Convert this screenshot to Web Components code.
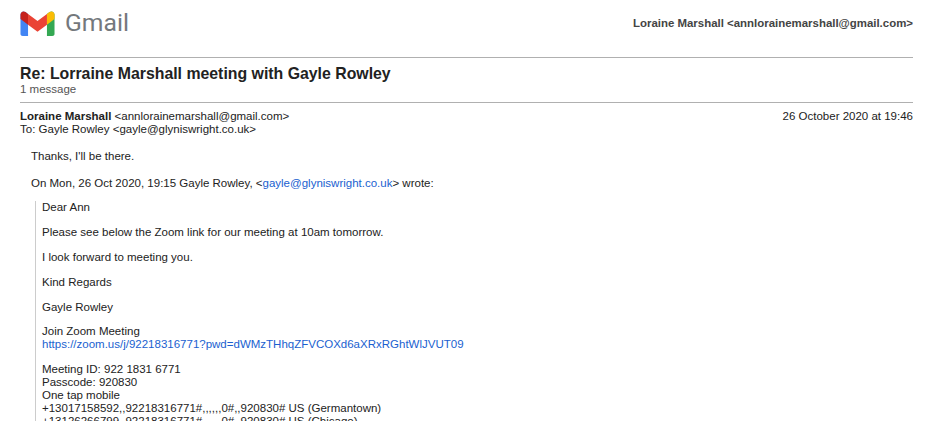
<!DOCTYPE html>
<html lang="en"><head><meta charset="utf-8"><title>Gmail - Re: Lorraine Marshall meeting with Gayle Rowley</title>
<style>
html,body{margin:0;height:421px;overflow:hidden;background:#fff}
body{font:11.5px/13px "Liberation Sans",Arial,sans-serif;color:#222}
gm-message a{color:#1a5fd0}
</style></head><body>
<gm-print>
  <gm-top slot="top" account="Loraine Marshall &lt;annlorainemarshall@gmail.com&gt;"></gm-top>
  <gm-subject slot="subject" count="1 message">Re: Lorraine Marshall meeting with Gayle Rowley</gm-subject>
  <gm-meta slot="meta" name="Loraine Marshall" addr="&lt;annlorainemarshall@gmail.com&gt;" date="26 October 2020 at 19:46" to="To: Gayle Rowley &lt;gayle@glyniswright.co.uk&gt;"></gm-meta>
  <gm-message slot="body">
    <p>Thanks, I'll be there.</p>
    <p>On Mon, 26 Oct 2020, 19:15 Gayle Rowley, &lt;<a>gayle@glyniswright.co.uk</a>&gt; wrote:</p>
    <gm-quote>
      <p>Dear Ann</p>
      <p>Please see below the Zoom link for our meeting at 10am tomorrow.</p>
      <p>I look forward to meeting you.</p>
      <p>Kind Regards</p>
      <p>Gayle Rowley</p>
      <p>Join Zoom Meeting<br><a>https://zoom.us/j/92218316771?pwd=dWMzTHhqZFVCOXd6aXRxRGhtWlJVUT09</a></p>
      <p>Meeting ID: 922 1831 6771<br>Passcode: 920830<br>One tap mobile<br>+13017158592,,92218316771#,,,,,,0#,,920830# US (Germantown)<br>+13126266799,,92218316771#,,,,,,0#,,920830# US (Chicago)</p>
    </gm-quote>
  </gm-message>
</gm-print>
<script>
function def(name, html){
  customElements.define(name, class extends HTMLElement{
    connectedCallback(){
      if(this.shadowRoot) return;
      this.attachShadow({mode:'open'}).innerHTML=html(this);
    }
  });
}
const esc=s=>(s||'').replace(/&/g,'&amp;').replace(/</g,'&lt;');
def('gm-print',()=>`<style>
:host{display:block;padding:0 16px 0 20px;height:421px;overflow:hidden}
</style><slot name="top"></slot><slot name="subject"></slot><slot name="meta"></slot><slot name="body"></slot>`);
def('gm-top',h=>`<style>
:host{display:flex;justify-content:space-between;align-items:flex-start;height:57px;border-bottom:1px solid #b0b0b0}
.logo{display:flex;align-items:center;gap:10px;margin-top:9px}
svg{display:block}
.word{font:24.7px/26px Roboto,sans-serif;color:#74787c;padding-top:1px}
.acct{font-weight:700;color:#444;margin-top:17px;font-size:11.45px;white-space:nowrap}
</style>
<div class="logo"><svg width="35" height="26" viewBox="0 0 36 27.5">
<path d="M0 5C0 2 3 .5 5.300 2.200L8 4.200V27.500H2.400C1 27.500 0 26.500 0 25.100Z" fill="#4285f4"/>
<path d="M36 5c0-3-3-4.500-5.300-2.800L28 4.200V27.500h5.600c1.400 0 2.400-1 2.400-2.400Z" fill="#34a853"/>
<path d="M28 4.200 30.700 2.200C33 .5 36 2 36 5V9.500L28 15.500Z" fill="#fbbc04"/>
<path d="M8 4.200 18 11.700 28 4.200V15.500L18 23 8 15.500Z" fill="#ea4335"/>
<path d="M0 5C0 2 3 .5 5.300 2.200L8 4.200V15.500L0 9.500Z" fill="#c5221f"/>
</svg><span class="word">Gmail</span></div>
<div class="acct">${esc(h.getAttribute('account'))}</div>`);
def('gm-subject',h=>`<style>
:host{display:block;height:44px;border-bottom:1px solid #b0b0b0;color:#222}
.t{font-weight:700;font-size:15.85px;line-height:18px;padding-top:7px}
.c{font-size:11.5px;line-height:13px;color:#555}
</style><div class="t"><slot></slot></div><div class="c">${esc(h.getAttribute('count'))}</div>`);
def('gm-meta',h=>`<style>
:host{display:block;padding-top:7px;line-height:13px}
.row{display:flex;justify-content:space-between}
b{font-weight:700}
</style><div class="row"><span><b>${esc(h.getAttribute('name'))}</b> ${esc(h.getAttribute('addr'))}</span><span>${esc(h.getAttribute('date'))}</span></div><div>${esc(h.getAttribute('to'))}</div>`);
def('gm-message',()=>`<style>
:host{display:block;padding:14px 0 0 11px;line-height:13px}
::slotted(p){margin:0 0 14px}
</style><slot></slot>`);
def('gm-quote',()=>`<style>
:host{display:block;border-left:1px solid #ccc;padding-left:6px;margin:-3px 0 0 4px}
::slotted(p){margin:0 0 11.9px}
</style><slot></slot>`);
</script>
</body></html>
